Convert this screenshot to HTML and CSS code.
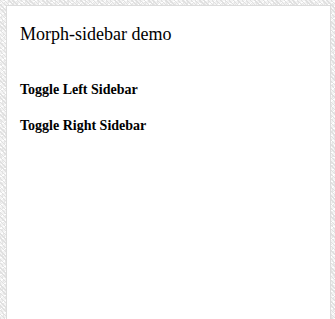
FILE: index.html
```html
<!DOCTYPE html>
<html lang="en">
<head>
    <meta charset="UTF-8">
    <meta name="viewport" content="width=device-width, initial-scale=1.0">
    <title>Morph-sidebar demo</title>
    <link rel="stylesheet" href="styles.css">
</head>
<body>
    <div class="page">
        <h1>Morph-sidebar demo</h1>
        <div class="toggles">
            <a class="toggle" href="#">Toggle Left Sidebar</a>
            <a class="toggle" href="#">Toggle Right Sidebar</a>
        </div>
    </div>
</body>
</html>
```

FILE: styles.css
```css
html, body {
    height: 100%;
}

body {
    margin: 0;
    padding: 5px 4px 0 6px;
    box-sizing: border-box;
    font-family: 'Liberation Serif', 'Times New Roman', serif;
    color: #000;
    background-color: #f3f3f3;
    background-image:
        repeating-linear-gradient(45deg, #e0e0e0 0 1px, transparent 1px 3px),
        repeating-linear-gradient(-30deg, #fff 0 1px, transparent 1px 5px),
        repeating-linear-gradient(70deg, #e6e6e6 0 1px, transparent 1px 4px);
}

.page {
    min-height: 100%;
    box-sizing: border-box;
    background: #fff;
    border: 1px solid #dcdcdc;
    border-bottom: none;
    padding: 18px 13px;
}

h1 {
    margin: 0 0 37px;
    font-size: 18px;
    line-height: 21px;
    font-weight: normal;
}

.toggles {
    display: flex;
    flex-direction: column;
    gap: 20px;
}

.toggle {
    color: #000;
    text-decoration: none;
    font-weight: bold;
    font-size: 14px;
    line-height: 16px;
}
```
